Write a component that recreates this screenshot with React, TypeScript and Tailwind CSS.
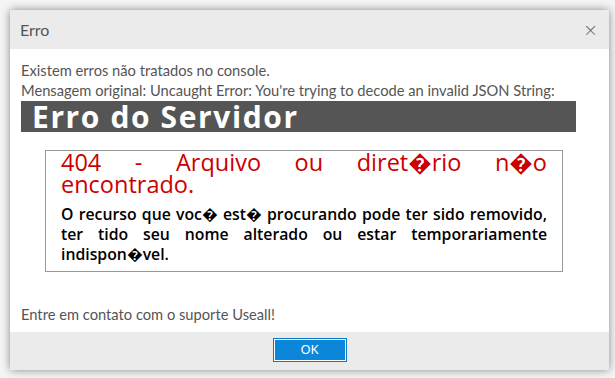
import React from 'react';

const sans = "font-['Lato','Liberation_Sans',sans-serif]";

export default function App() {
  return (
    <div className="w-[615px] h-[378px] bg-[#f4f4f4] pl-[10px] pt-[10px]">
      <div className="flex h-[360px] w-[599px] flex-col overflow-hidden rounded-[2px] bg-white shadow-[0_0_8px_rgba(0,0,0,0.45)]">
        <div className="flex h-[39px] shrink-0 items-center justify-between bg-[#ebebeb] pl-[10px] pr-[11px]">
          <span className={`${sans} text-[16px] text-[#555]`}>Erro</span>
          <span className="font-['DejaVu_Sans',sans-serif] text-[18px] font-light leading-none text-[#666]">×</span>
        </div>

        <div className={`${sans} flex-1 px-[11px] pt-[11px] text-[14.7px] leading-[20px] text-[#555]`}>
          <div>Existem erros não tratados no console.</div>
          <div>Mensagem original: Uncaught Error: You're trying to decode an invalid JSON String:</div>

          <div className="mt-[1px] h-[31px] w-[555px] bg-[#555] pl-[11px] font-['Open_Sans',sans-serif] text-[30px] font-bold leading-[31px] tracking-[1.6px] text-white">
            Erro do Servidor
          </div>

          <div className="ml-[24px] mt-[18px] w-[518px] border border-[#999] px-[15px] pb-[7px] font-['Open_Sans',sans-serif]">
            <h2 className="text-justify text-[23.5px] leading-[22px] text-[#cc0000]">
              404 - Arquivo ou diret�rio n�o encontrado.
            </h2>
            <h3 className="mt-[9px] text-justify text-[15.8px] font-semibold leading-[20px] text-black">
              O recurso que voc� est� procurando pode ter sido removido, ter tido seu nome alterado ou estar temporariamente indispon�vel.
            </h3>
          </div>

          <div className="mt-[32px]">Entre em contato com o suporte Useall!</div>
        </div>

        <div className="flex h-[38px] shrink-0 items-center justify-center bg-[#ebebeb]">
          <button className="mt-[-2px] h-[24px] w-[74px] border border-[#0a78c8] bg-[#0b86d9] text-[13px] text-white outline outline-1 -outline-offset-2 outline-white">
            OK
          </button>
        </div>
      </div>
    </div>
  );
}
